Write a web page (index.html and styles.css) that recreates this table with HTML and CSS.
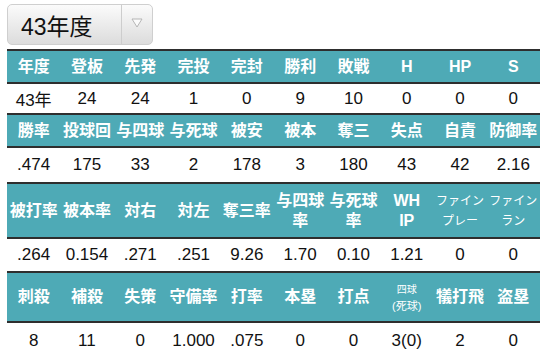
FILE: index.html
```html
<!DOCTYPE html>
<html lang="ja">
<head>
<meta charset="utf-8">
<link rel="stylesheet" href="styles.css">
</head>
<body>
<div class="page">
  <div class="select">
    <span class="select-label">43年度</span>
    <span class="select-btn">
      <svg width="12" height="10" viewBox="0 0 12 10"><polygon points="1,1 11,1 6,9" fill="#fbfbfb" stroke="#b5b5b5" stroke-width="1" stroke-linejoin="round"/></svg>
    </span>
  </div>
  <table class="stats">
    <tr class="hd h1">
      <th>年度</th><th>登板</th><th>先発</th><th>完投</th><th>完封</th><th>勝利</th><th>敗戦</th><th>H</th><th>HP</th><th>S</th>
    </tr>
    <tr class="dt d1">
      <td>43年</td><td>24</td><td>24</td><td>1</td><td>0</td><td>9</td><td>10</td><td>0</td><td>0</td><td>0</td>
    </tr>
    <tr class="hd h2">
      <th>勝率</th><th>投球回</th><th>与四球</th><th>与死球</th><th>被安</th><th>被本</th><th>奪三</th><th>失点</th><th>自責</th><th>防御率</th>
    </tr>
    <tr class="dt d2">
      <td>.474</td><td>175</td><td>33</td><td>2</td><td>178</td><td>3</td><td>180</td><td>43</td><td>42</td><td>2.16</td>
    </tr>
    <tr class="hd h3">
      <th>被打率</th><th>被本率</th><th>対右</th><th>対左</th><th>奪三率</th><th>与四球<br>率</th><th>与死球<br>率</th><th>WH<br>IP</th><th class="sm">ファイン<br>プレー</th><th class="sm">ファイン<br>ラン</th>
    </tr>
    <tr class="dt d3">
      <td>.264</td><td>0.154</td><td>.271</td><td>.251</td><td>9.26</td><td>1.70</td><td>0.10</td><td>1.21</td><td>0</td><td>0</td>
    </tr>
    <tr class="hd h4">
      <th>刺殺</th><th>補殺</th><th>失策</th><th>守備率</th><th>打率</th><th>本塁</th><th>打点</th><th class="xs"><span class="xs1">四球</span><br>(死球)</th><th>犠打飛</th><th>盗塁</th>
    </tr>
    <tr class="dt d4">
      <td>8</td><td>11</td><td>0</td><td>1.000</td><td>.075</td><td>0</td><td>0</td><td>3(0)</td><td>2</td><td>0</td>
    </tr>
  </table>
</div>
</body>
</html>
```

FILE: styles.css
```css
html, body {
  margin: 0;
  padding: 0;
  background: #ffffff;
}

body {
  font-family: "Liberation Sans", "Noto Sans CJK JP", sans-serif;
  color: #111;
}

.page {
  padding: 4px 8px 0 7px;
}

.select {
  display: flex;
  width: 146px;
  height: 41px;
  box-sizing: border-box;
  border: 1px solid #cfcfcf;
  border-radius: 5px;
  background: linear-gradient(#fbfbfb, #dcdcdc);
  overflow: hidden;
}

.select-label {
  flex: 1;
  display: flex;
  align-items: center;
  padding-left: 13px;
  font-size: 23px;
  color: #111;
}

.select-btn {
  width: 30px;
  display: flex;
  align-items: center;
  justify-content: center;
  border-left: 1px solid #cdcdcd;
  padding-bottom: 3px;
}

.stats {
  margin-top: 4px;
  width: 533px;
  border-collapse: collapse;
  table-layout: fixed;
  border-top: 2px solid #2e2e2e;
}

.stats tr {
  border-bottom: 2px solid #2e2e2e;
}

.stats th,
.stats td {
  padding: 0;
  text-align: center;
  vertical-align: middle;
  white-space: nowrap;
}

.hd th {
  background: #4eaab6;
  color: #ffffff;
  font-weight: bold;
  font-size: 16px;
  line-height: 20px;
}

.dt td {
  font-size: 17px;
  color: #111;
}

.h1 { height: 33px; }
.d1 { height: 31px; }
.h2 { height: 33px; }
.d2 { height: 36px; }
.h3 { height: 55px; }
.d3 { height: 34px; }
.h4 { height: 50px; }
.d4 { height: 38px; }

.hd th.sm {
  font-size: 12px;
  line-height: 20px;
  font-weight: normal;
}

.hd th.xs {
  font-size: 11px;
  line-height: 16px;
  font-weight: normal;
}

.xs1 {
  font-size: 10px;
}
```
